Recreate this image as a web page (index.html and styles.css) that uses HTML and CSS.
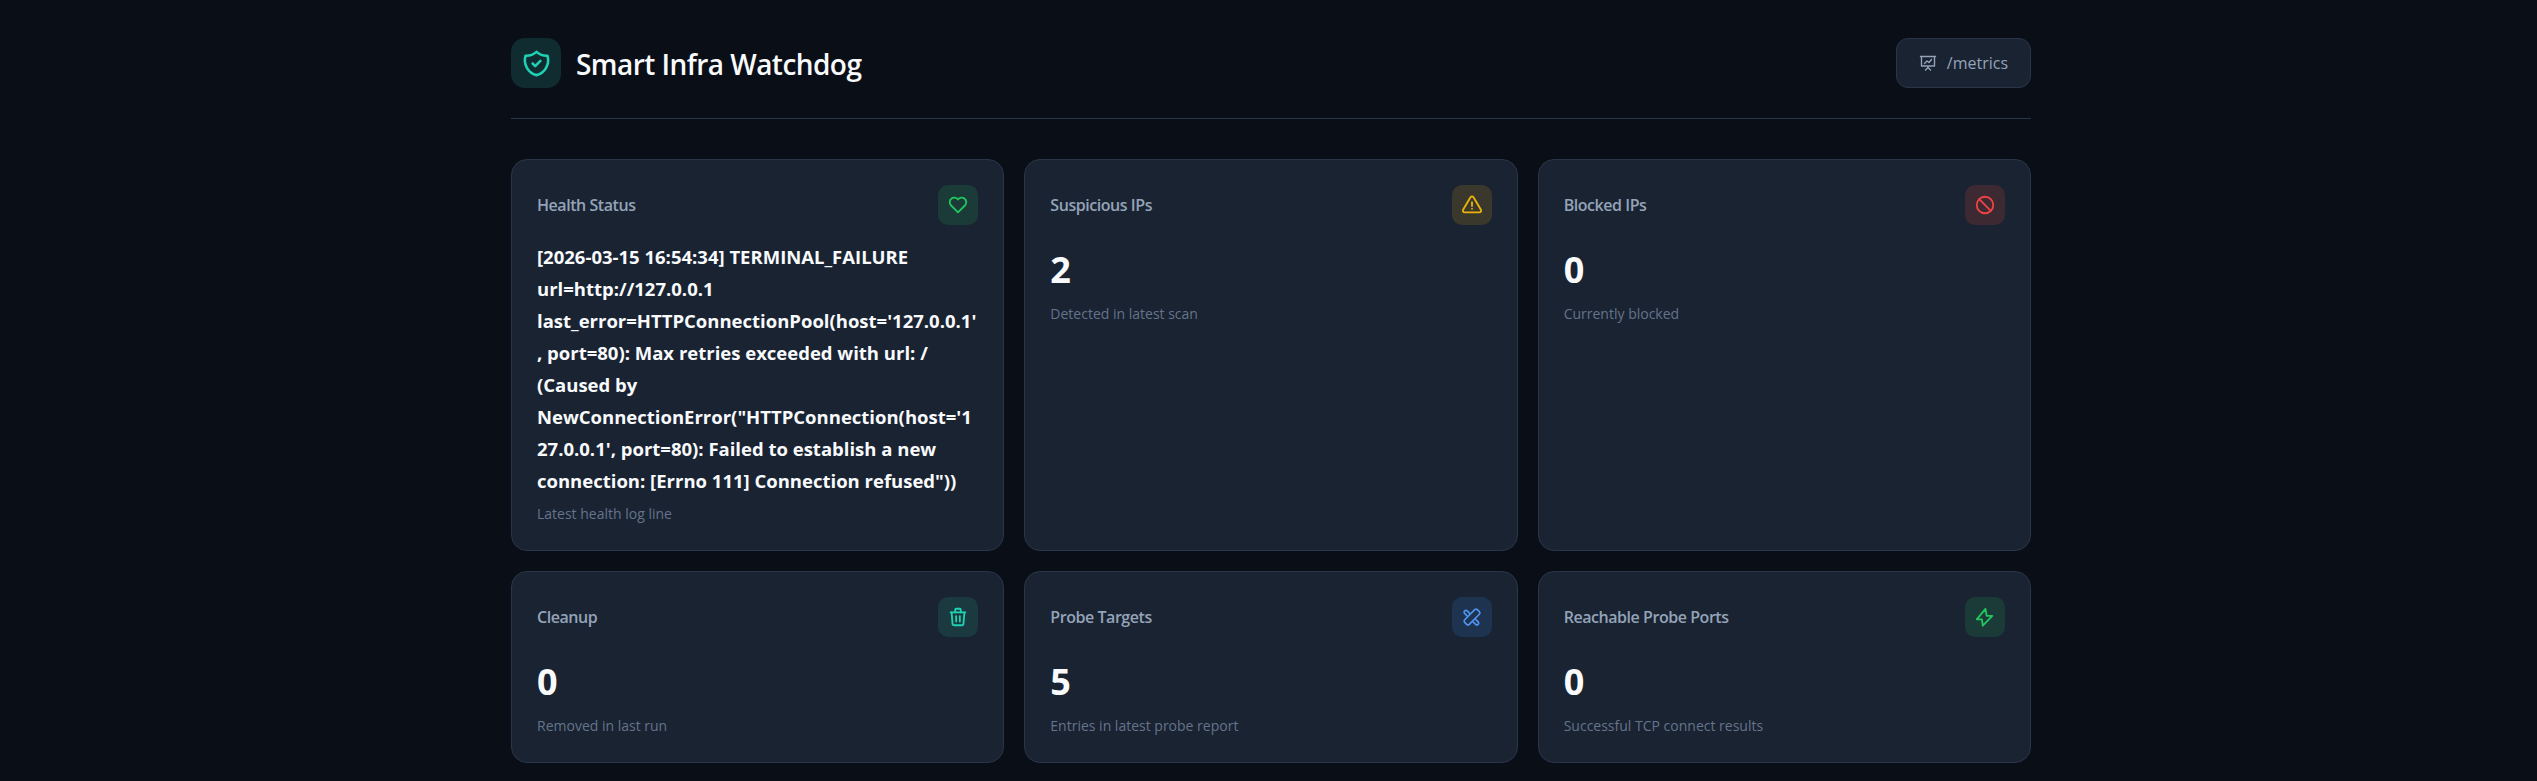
FILE: index.html
```html
<!DOCTYPE html>
<html>

<head>
	<title>Smart Infra Watchdog</title>
	<link rel="stylesheet" href="styles.css">
</head>

<body>
	<div class="container">
		<header class="header">
			<div class="brand">
				<div class="brand-icon">
					<svg viewBox="0 0 24 24" width="31" height="31"><path d="M12 3a12 12 0 0 0 8.5 3a12 12 0 0 1 -8.5 15a12 12 0 0 1 -8.5 -15a12 12 0 0 0 8.5 -3"/><path d="M9 12l2 2l4 -4"/></svg>
				</div>
				<h1>Smart Infra Watchdog</h1>
			</div>
			<a class="metrics-btn" href="#">
				<svg viewBox="0 0 18 18" width="18" height="18"><path d="M1.5 2.5h15M2.5 2.5v9.5h13v-9.5M9 12v1.5M6.5 16l2.5-2.5l2.5 2.5M5.5 9.5l2.5-2.5l2 1.5l2.5-3"/></svg>
				<span>/metrics</span>
			</a>
		</header>

		<div class="card-grid">
			<div class="card">
				<div class="card-head">
					<span class="card-label">Health Status</span>
					<div class="card-icon icon-green">
						<svg viewBox="0 0 24 24" width="22" height="22"><path d="M19.5 12.572l-7.5 7.428l-7.5 -7.428a5 5 0 1 1 7.5 -6.566a5 5 0 1 1 7.5 6.572"/></svg>
					</div>
				</div>
				<div class="log-line">[2026-03-15 16:54:34] TERMINAL_FAILURE url=http://127.0.0.1 last_error=HTTPConnectionPool(host='127.0.0.1', port=80): Max retries exceeded with url: / (Caused by NewConnectionError("HTTPConnection(host='127.0.0.1', port=80): Failed to establish a new connection: [Errno 111] Connection refused"))</div>
				<div class="card-sub">Latest health log line</div>
			</div>

			<div class="card">
				<div class="card-head">
					<span class="card-label">Suspicious IPs</span>
					<div class="card-icon icon-yellow">
						<svg viewBox="0 0 24 24" width="22" height="22"><path d="M12 9v4"/><path d="M10.363 3.591l-8.106 13.534a1.914 1.914 0 0 0 1.636 2.871h16.214a1.914 1.914 0 0 0 1.636 -2.87l-8.106 -13.536a1.914 1.914 0 0 0 -3.274 0"/><path d="M12 16h.01"/></svg>
					</div>
				</div>
				<div class="card-value">2</div>
				<div class="card-sub">Detected in latest scan</div>
			</div>

			<div class="card">
				<div class="card-head">
					<span class="card-label">Blocked IPs</span>
					<div class="card-icon icon-red">
						<svg viewBox="0 0 24 24" width="22" height="22"><path d="M3 12a9 9 0 1 0 18 0a9 9 0 1 0 -18 0"/><path d="M5.7 5.7l12.6 12.6"/></svg>
					</div>
				</div>
				<div class="card-value">0</div>
				<div class="card-sub">Currently blocked</div>
			</div>

			<div class="card">
				<div class="card-head">
					<span class="card-label">Cleanup</span>
					<div class="card-icon icon-teal">
						<svg viewBox="0 0 24 24" width="22" height="22"><path d="M4 7h16"/><path d="M10 11v6"/><path d="M14 11v6"/><path d="M5 7l1 12a2 2 0 0 0 2 2h8a2 2 0 0 0 2 -2l1 -12"/><path d="M9 7v-3a1 1 0 0 1 1 -1h4a1 1 0 0 1 1 1v3"/></svg>
					</div>
				</div>
				<div class="card-value">0</div>
				<div class="card-sub">Removed in last run</div>
			</div>

			<div class="card">
				<div class="card-head">
					<span class="card-label">Probe Targets</span>
					<div class="card-icon icon-blue">
						<svg viewBox="0 0 24 24" width="20" height="20"><path d="M18.4 3.2l2.4 2.4a2.2 2.2 0 0 1 0 3.1l-12.1 12.1a2.2 2.2 0 0 1 -3.1 0l-2.4 -2.4a2.2 2.2 0 0 1 0 -3.1l12.1 -12.1a2.2 2.2 0 0 1 3.1 0z"/><path d="M9.5 8l-3.7 -3.7a2.2 2.2 0 0 0 -3 3l3.7 3.7"/><path d="M16 14.5l3.7 3.7a2.2 2.2 0 0 1 -3 3l-3.7 -3.7"/></svg>
					</div>
				</div>
				<div class="card-value">5</div>
				<div class="card-sub">Entries in latest probe report</div>
			</div>

			<div class="card">
				<div class="card-head">
					<span class="card-label">Reachable Probe Ports</span>
					<div class="card-icon icon-green">
						<svg viewBox="0 0 24 24" width="22" height="22"><path d="M12.5 3.2l-9.5 11.3h5.6l1 7l10.4 -10.8h-6.2z"/></svg>
					</div>
				</div>
				<div class="card-value">0</div>
				<div class="card-sub">Successful TCP connect results</div>
			</div>
		</div>
	</div>
</body>

</html>
```

FILE: styles.css
```css
* {
	box-sizing: border-box;
}

body {
	margin: 0;
	background-color: #0a0e17;
	color: #f8fafc;
	font-family: "Open Sans", "Noto Sans", sans-serif;
	line-height: 1.6;
}

svg {
	fill: none;
	stroke: currentColor;
	stroke-width: 2;
	stroke-linecap: round;
	stroke-linejoin: round;
}

.container {
	width: 1520px;
	margin-left: 511px;
	padding: 38px 0 18px;
}

.header {
	display: flex;
	justify-content: space-between;
	align-items: center;
	padding-bottom: 30px;
	margin-bottom: 40px;
	border-bottom: 1px solid #2a3548;
}

.brand {
	display: flex;
	align-items: center;
	gap: 15px;
}

.brand-icon {
	display: flex;
	align-items: center;
	justify-content: center;
	width: 50px;
	height: 50px;
	border-radius: 14px;
	background-color: #102c31;
	color: #1fd1b2;
}

h1 {
	margin: 0;
	padding-top: 2px;
	font-size: 28px;
	font-weight: 600;
	letter-spacing: -0.55px;
}

.metrics-btn {
	display: flex;
	align-items: center;
	gap: 10px;
	height: 50px;
	padding: 0 22px;
	border: 1px solid #2a3548;
	border-radius: 12px;
	background-color: #1a2332;
	color: #94a3b8;
	font-size: 16px;
	text-decoration: none;
}

.metrics-btn span {
	padding-top: 2px;
}

.metrics-btn svg {
	stroke-width: 1.4;
}

.card-grid {
	display: grid;
	grid-template-columns: repeat(3, 1fr);
	gap: 20px;
}

.card {
	padding: 25px;
	border: 1px solid #2a3548;
	border-radius: 16px;
	background-color: #1a2332;
}

.card-head {
	display: flex;
	justify-content: space-between;
	align-items: center;
	margin-bottom: 16px;
}

.card-label {
	padding-top: 2px;
	color: #94a3b8;
	font-size: 16px;
	font-weight: 600;
	letter-spacing: -0.45px;
}

.card-icon {
	display: flex;
	align-items: center;
	justify-content: center;
	width: 40px;
	height: 40px;
	border-radius: 10px;
}

.icon-green {
	background-color: #1b3b38;
	color: #22c55e;
}

.icon-yellow {
	background-color: #3a372d;
	color: #eab308;
}

.icon-red {
	background-color: #3c2932;
	color: #ef4444;
}

.icon-teal {
	background-color: #1a3a40;
	color: #1fd1b2;
}

.icon-blue {
	background-color: #1e3350;
	color: #4f94ef;
}

.card-value {
	padding-top: 2px;
	color: #f8fafc;
	font-size: 36px;
	font-weight: 700;
	line-height: 54px;
}

.log-line {
	color: #f8fafc;
	font-size: 18.5px;
	font-weight: 700;
	line-height: 32px;
	overflow-wrap: anywhere;
}

.card-sub {
	margin-top: 5.6px;
	color: #64748b;
	font-size: 14px;
}
```
